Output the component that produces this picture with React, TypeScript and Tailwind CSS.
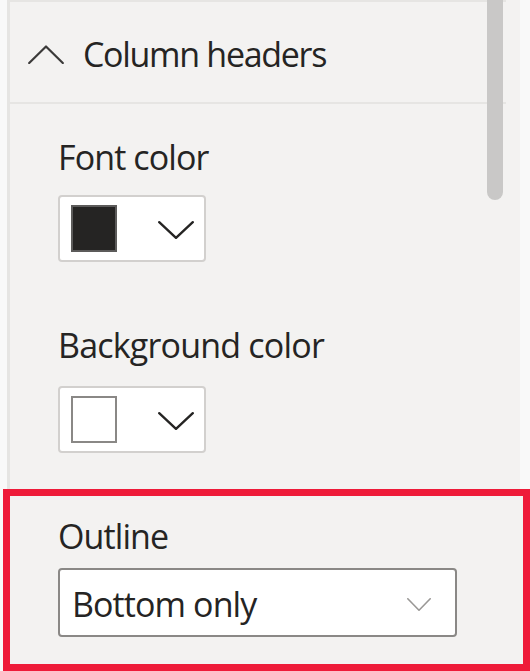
import React from "react";

const font = { fontFamily: '"Open Sans", "Noto Sans", sans-serif' };

function Chevron({ w, h, stroke, sw }: { w: number; h: number; stroke: string; sw: number }) {
  return (
    <svg width={w} height={h} viewBox={`0 0 ${w} ${h}`} fill="none">
      <polyline points={`${sw / 2},${sw / 2} ${w / 2},${h - sw / 2} ${w - sw / 2},${sw / 2}`} stroke={stroke} strokeWidth={sw} strokeLinecap="round" strokeLinejoin="round" />
    </svg>
  );
}

function SwatchBox({ fill, border }: { fill: string; border: string }) {
  return (
    <div className="ml-[48px] flex h-[67px] w-[148px] items-center justify-between rounded-[4px] border-2 border-[#d2d0ce] bg-white pl-[11px] pr-[10px]">
      <div className="h-[47px] w-[46px] border-2" style={{ backgroundColor: fill, borderColor: border }} />
      <div className="mt-[2px]">
        <Chevron w={36} h={18} stroke="#252423" sw={2.4} />
      </div>
    </div>
  );
}

export default function App() {
  return (
    <div className="relative flex h-[671px] w-[530px] flex-col overflow-hidden bg-[#f9f9f9] text-[#252423]" style={font}>
      <div className="flex h-[489px] shrink-0">
        <div className="w-[7px] shrink-0" />
        <div className="relative flex w-[513px] shrink-0 flex-col border-l-[3px] border-[#e6e5e3] bg-[#f3f2f1]">
          <div className="h-[2px] w-[496px] bg-[#e6e5e3]" />
          <div className="flex h-[100px] items-center">
            <div className="ml-[18px] mt-[4px]">
              <svg width="36" height="19" viewBox="0 0 36 19" fill="none">
                <polyline points="1.2,18 18,1.5 34.8,18" stroke="#3b3a39" strokeWidth="2.2" strokeLinecap="round" strokeLinejoin="round" />
              </svg>
            </div>
            <span className="ml-[19px] mt-[4px] text-[34px] leading-[34px] tracking-[-1.3px]">Column headers</span>
          </div>
          <div className="h-[2px] w-[496px] bg-[#e6e5e3]" />
          <div className="ml-[48px] mt-[36px] text-[34px] leading-[34px] tracking-[-0.9px]">Font color</div>
          <div className="mt-[21px]">
            <SwatchBox fill="#252423" border="#5c5b5a" />
          </div>
          <div className="ml-[48px] mt-[66px] text-[34px] leading-[34px] tracking-[-0.8px]">Background color</div>
          <div className="mt-[24px]">
            <SwatchBox fill="#ffffff" border="#8a8886" />
          </div>
          <div className="absolute left-[477px] top-0 h-[200px] w-[16px] rounded-b-full bg-[#c9c8c7]" />
        </div>
      </div>
      <div className="ml-[3px] flex flex-1 flex-col border-[7px] border-[#ee1b39] bg-[#f3f2f1]">
        <div className="ml-[48px] mt-[23px] text-[34px] leading-[34px] tracking-[-0.9px]">Outline</div>
        <div className="ml-[48px] mt-[15px] flex h-[69px] w-[399px] items-center justify-between rounded-[4px] border-2 border-[#8a8886] bg-white pl-[12px] pr-[24px]">
          <span className="mt-[2px] text-[34px] leading-[34px] tracking-[-0.9px]">Bottom only</span>
          <div className="mt-[4px]">
            <Chevron w={24} h={13} stroke="#9a9896" sw={1.6} />
          </div>
        </div>
      </div>
    </div>
  );
}
